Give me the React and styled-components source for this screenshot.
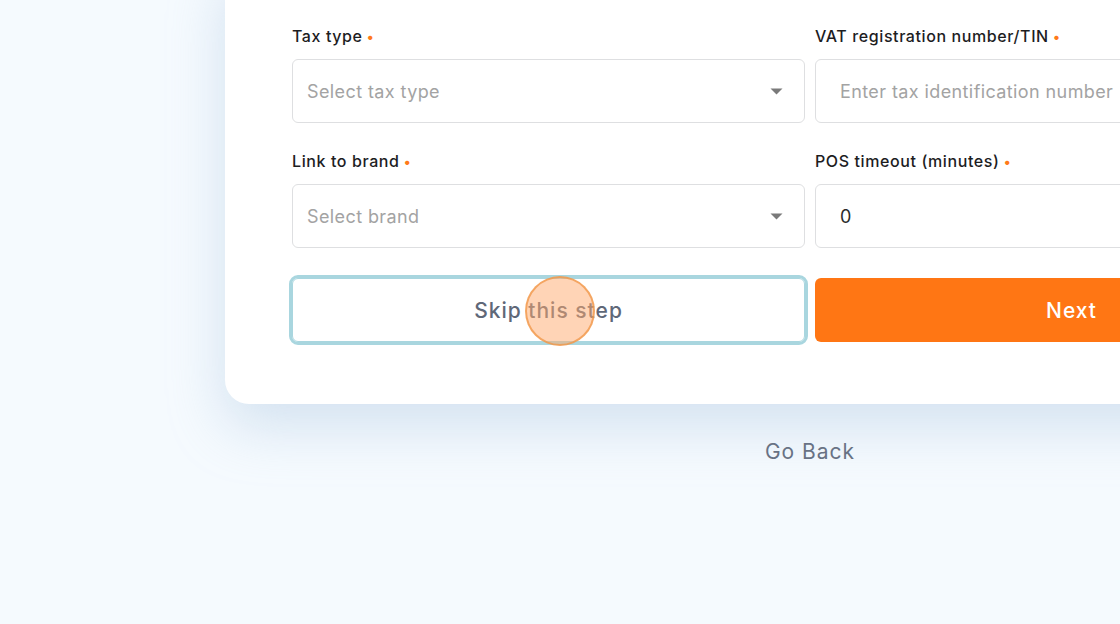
import React from "react";
import styled, { createGlobalStyle } from "styled-components";

const Global = createGlobalStyle`
  html, body { margin: 0; padding: 0; }
  body {
    background: #f5fafe;
    font-family: "Inter", "Liberation Sans", sans-serif;
    overflow: hidden;
    width: 1120px;
    height: 624px;
  }
`;

const Page = styled.div`
  padding-left: 225px;
  margin-top: -40px;
`;

const Column = styled.div`
  width: 1170px;
  display: flex;
  flex-direction: column;
  align-items: center;
`;

const Card = styled.div`
  width: 100%;
  box-sizing: border-box;
  background: #ffffff;
  border-radius: 24px;
  padding: 64px 67px 62px;
  box-shadow: 0 22px 55px rgba(160, 190, 220, 0.4);
`;

const Grid = styled.div`
  display: grid;
  grid-template-columns: 1fr 1fr;
  column-gap: 10px;
  row-gap: 26px;
`;

const Field = styled.div`
  display: flex;
  flex-direction: column;
  gap: 10px;
`;

const Label = styled.label`
  font-size: 16px;
  line-height: 25px;
  font-weight: 500;
  color: #1d1d1f;
  letter-spacing: 0.6px;
`;

const Req = styled.span`
  color: #ff7a1a;
  margin-left: 4px;
  font-size: 14px;
`;

const Box = styled.div`
  height: 64px;
  box-sizing: border-box;
  border: 1px solid #dedfe1;
  border-radius: 6px;
  background: #fff;
  display: flex;
  align-items: center;
  padding: 0 21px 0 ${(p) => p.$pad || 14}px;
  font-size: 18px;
  letter-spacing: 0.4px;
  color: ${(p) => (p.$value ? "#2b2b2b" : "#a3a3a3")};
  justify-content: space-between;
`;

const Caret = styled.svg`
  width: 13px;
  height: 7px;
  flex: none;
`;

const Actions = styled.div`
  display: grid;
  grid-template-columns: 1fr 1fr;
  column-gap: 10px;
  margin-top: 30px;
`;

const Button = styled.button`
  position: relative;
  height: 64px;
  border-radius: 6px;
  font-family: inherit;
  font-size: 21px;
  font-weight: 500;
  letter-spacing: 1px;
  padding-bottom: 0;
  cursor: pointer;
  border: ${(p) => (p.$primary ? "none" : "1px solid #a9d6df")};
  background: ${(p) => (p.$primary ? "#ff7614" : "#ffffff")};
  color: ${(p) => (p.$primary ? "#ffffff" : "#5f6878")};
  outline: ${(p) => (p.$primary ? "none" : "3px solid #a9d6df")};
  outline-offset: 0;
`;

const Click = styled.span`
  position: absolute;
  left: 232px;
  top: -3px;
  width: 70px;
  height: 70px;
  border-radius: 50%;
  background: rgba(255, 170, 110, 0.5);
  border: 2px solid rgba(240, 150, 70, 0.75);
  box-sizing: border-box;
`;

const GoBack = styled.a`
  margin-top: 35px;
  font-size: 21px;
  letter-spacing: 1px;
  color: #687284;
  cursor: pointer;
`;

const CaretIcon = () => (
  <Caret viewBox="0 0 13 7">
    <path d="M0.5 0.5 L12.5 0.5 L6.5 6.5 Z" fill="#7a7a7a" />
  </Caret>
);

export default function App() {
  return (
    <>
      <Global />
      <Page>
        <Column>
          <Card>
            <Grid>
              <Field>
                <Label>Tax type<Req>•</Req></Label>
                <Box>
                  <span>Select tax type</span>
                  <CaretIcon />
                </Box>
              </Field>
              <Field>
                <Label>VAT registration number/TIN<Req>•</Req></Label>
                <Box $pad={24}>Enter tax identification number</Box>
              </Field>
              <Field>
                <Label>Link to brand<Req>•</Req></Label>
                <Box>
                  <span>Select brand</span>
                  <CaretIcon />
                </Box>
              </Field>
              <Field>
                <Label>POS timeout (minutes)<Req>•</Req></Label>
                <Box $pad={24} $value>0</Box>
              </Field>
            </Grid>
            <Actions>
              <Button>
                Skip this step
                <Click />
              </Button>
              <Button $primary>Next</Button>
            </Actions>
          </Card>
          <GoBack>Go Back</GoBack>
        </Column>
      </Page>
    </>
  );
}
